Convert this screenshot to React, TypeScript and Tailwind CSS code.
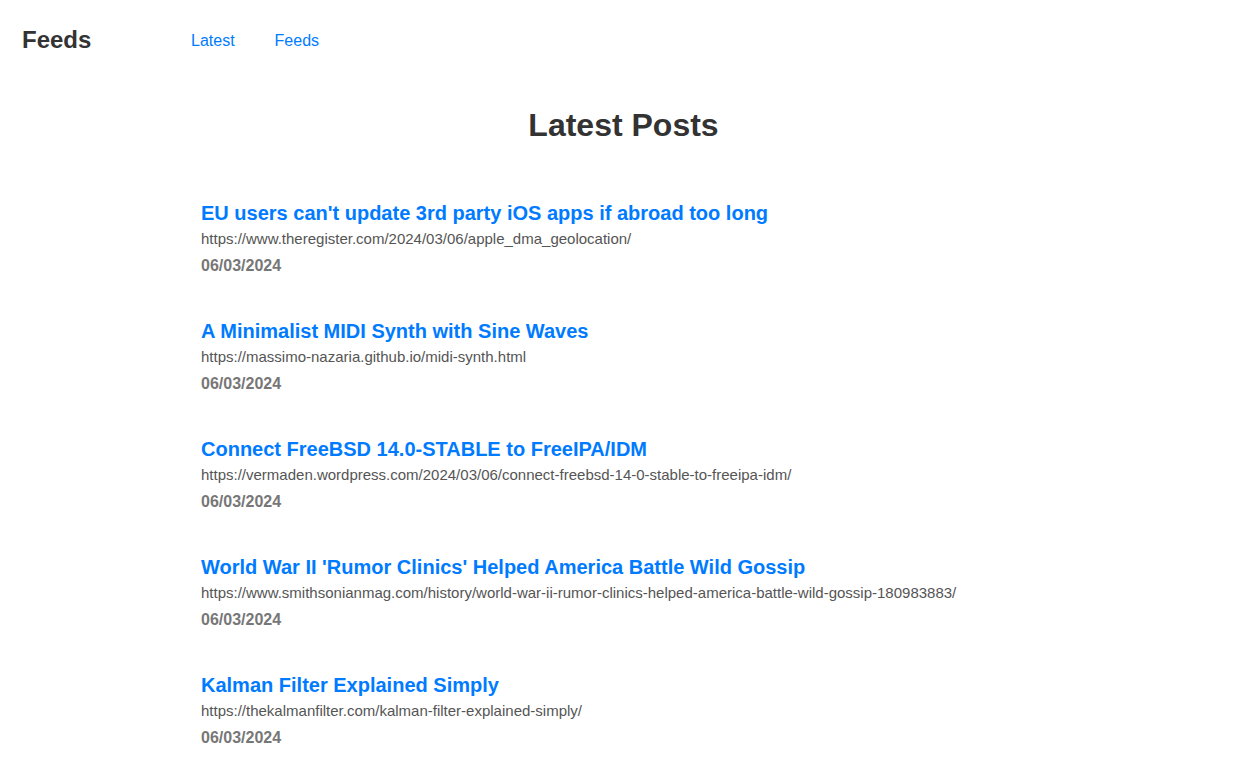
import React from "react";

const posts = [
  {
    title: "EU users can't update 3rd party iOS apps if abroad too long",
    url: "https://www.theregister.com/2024/03/06/apple_dma_geolocation/",
    date: "06/03/2024",
  },
  {
    title: "A Minimalist MIDI Synth with Sine Waves",
    url: "https://massimo-nazaria.github.io/midi-synth.html",
    date: "06/03/2024",
  },
  {
    title: "Connect FreeBSD 14.0-STABLE to FreeIPA/IDM",
    url: "https://vermaden.wordpress.com/2024/03/06/connect-freebsd-14-0-stable-to-freeipa-idm/",
    date: "06/03/2024",
  },
  {
    title: "World War II 'Rumor Clinics' Helped America Battle Wild Gossip",
    url: "https://www.smithsonianmag.com/history/world-war-ii-rumor-clinics-helped-america-battle-wild-gossip-180983883/",
    date: "06/03/2024",
  },
  {
    title: "Kalman Filter Explained Simply",
    url: "https://thekalmanfilter.com/kalman-filter-explained-simply/",
    date: "06/03/2024",
  },
];

export default function App() {
  return (
    <div className="min-h-screen bg-white text-[#333] font-['Liberation_Sans',Arial,sans-serif]">
      {/* Header */}
      <header className="flex items-center h-[80px] px-[22px]">
        <span className="text-[24px] leading-[28px] font-bold w-[169px]">Feeds</span>
        <nav className="flex gap-[40px] pt-[1px] text-[16px] leading-[24px] text-[#007bff]">
          <a href="#">Latest</a>
          <a href="#">Feeds</a>
        </nav>
      </header>

      {/* Main */}
      <main className="pt-[25px]">
        <h1 className="text-center text-[32px] leading-[40px] font-bold">Latest Posts</h1>
        <ul className="mt-[56px] pl-[201px] flex flex-col gap-[43px]">
          {posts.map((p) => (
            <li key={p.title}>
              <a href="#" className="block text-[20px] leading-[24px] font-bold text-[#007bff]">
                {p.title}
              </a>
              <p className="mt-[4px] text-[15px] leading-[20px] text-[#555]">{p.url}</p>
              <p className="mt-[7px] text-[16px] leading-[20px] font-bold text-[#777]">{p.date}</p>
            </li>
          ))}
        </ul>
      </main>
    </div>
  );
}
